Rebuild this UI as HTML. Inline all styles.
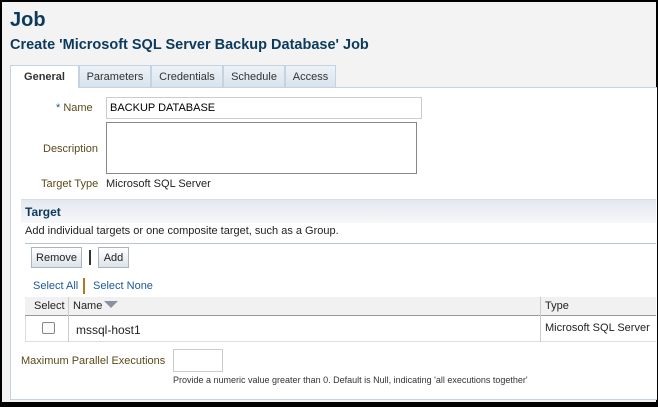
<!DOCTYPE html>
<html><head><style>
body{margin:0;width:658px;height:407px;background:#000;font-family:"Liberation Sans",Arial,sans-serif;overflow:hidden;position:relative}
.bg{position:absolute;left:2px;top:2px;width:654px;height:400px;background:#f3f3f3}
.a{position:absolute;white-space:nowrap}
.panel{position:absolute;left:10px;top:87px;width:646px;height:311px;background:#fff;border-left:1px solid #c5d3e0;border-top:1px solid #c5d3e0;border-bottom:1px solid #c5d3e0}
.tab{position:absolute;top:65px;height:22px;background:linear-gradient(#edf2f7,#d9e3ed);border:1px solid #c5d3e0;border-bottom:none;font-size:11px;color:#333;line-height:22px;text-align:center;box-sizing:border-box}
.lbl{font-size:11px;color:#5a4a1a}
.btn{position:absolute;height:21px;border:1px solid #a9b4bf;background:linear-gradient(#fff,#dde3ea);font-size:11px;line-height:20px;text-align:center;box-sizing:border-box;color:#222}
.lnk{font-size:11px;color:#1a5a96}
</style></head><body>
<div class="bg"></div>
<div class="a" style="left:10px;top:9px;font-size:20px;font-weight:bold;color:#0b3a5c">Job</div>
<div class="a" style="left:10px;top:37px;font-size:14.5px;font-weight:bold;color:#0b3a5c">Create 'Microsoft SQL Server Backup Database' Job</div>
<div class="panel"></div>
<div class="tab" style="left:10px;width:69px;background:#fff;font-weight:bold;height:23px">General</div>
<div class="tab" style="left:79px;width:72px">Parameters</div>
<div class="tab" style="left:151px;width:72px">Credentials</div>
<div class="tab" style="left:223px;width:62px">Schedule</div>
<div class="tab" style="left:285px;width:51px">Access</div>
<div class="a lbl" style="left:56px;top:102px"><span style="color:#1a5a96">*</span> Name</div>
<div class="a" style="left:106px;top:97px;width:316px;height:22px;border:1px solid #ccc;box-sizing:border-box;font-size:11px;line-height:20px;padding-left:3px">BACKUP DATABASE</div>
<div class="a lbl" style="left:43px;top:143px">Description</div>
<div class="a" style="left:106px;top:122px;width:311px;height:52px;border:1px solid #888;box-sizing:border-box"></div>
<div class="a lbl" style="left:41px;top:178px">Target Type</div>
<div class="a" style="left:106px;top:178px;font-size:11px;color:#222">Microsoft SQL Server</div>
<div class="a" style="left:21px;top:199px;width:635px;height:23px;background:linear-gradient(#e4e8ee,#f6f7f9);border-top:1px solid #d8dde3"></div>
<div class="a" style="left:25px;top:205px;font-size:12px;font-weight:bold;color:#0b3a5c">Target</div>
<div class="a" style="left:25px;top:225px;font-size:11px;color:#222">Add individual targets or one composite target, such as a Group.</div>
<div class="a" style="left:25px;top:243px;width:631px;height:1px;background:#b8c6d4"></div>
<div class="btn" style="left:31px;top:247px;width:51px">Remove</div>
<div class="a" style="left:89px;top:250px;width:2px;height:15px;background:#333"></div>
<div class="btn" style="left:98px;top:247px;width:31px">Add</div>
<div class="a lnk" style="left:33px;top:280px">Select All</div>
<div class="a" style="left:83px;top:278px;width:2px;height:16px;background:#b07a1a"></div>
<div class="a lnk" style="left:93px;top:280px">Select None</div>
<div class="a" style="left:25px;top:297px;width:631px;height:45px;border-left:1px solid #ddd;border-bottom:1px solid #ddd;box-sizing:border-box"></div>
<div class="a" style="left:25px;top:297px;width:631px;height:19px;background:#f1f1f1;border-bottom:1px solid #999;box-sizing:border-box"></div>
<div class="a" style="left:68px;top:297px;width:1px;height:45px;background:#ccc"></div>
<div class="a" style="left:540px;top:297px;width:1px;height:45px;background:#ccc"></div>
<div class="a" style="left:34px;top:300px;font-size:11px;color:#222">Select</div>
<div class="a" style="left:73px;top:300px;font-size:11px;color:#222">Name</div>
<svg class="a" style="left:104px;top:301px" width="14" height="8"><path d="M0 0H14L7 7Z" fill="#8892a0"/></svg>
<div class="a" style="left:545px;top:300px;font-size:11px;color:#222">Type</div>
<div class="a" style="left:42px;top:322px;width:11px;height:10px;border:1px solid #888;border-radius:2px;background:#fafafa"></div>
<div class="a" style="left:76px;top:323px;font-size:12px;color:#222">mssql-host1</div>
<div class="a" style="left:545px;top:322px;font-size:11px;color:#222">Microsoft SQL Server</div>
<div class="a lbl" style="left:21px;top:355px">Maximum Parallel Executions</div>
<div class="a" style="left:173px;top:349px;width:50px;height:23px;border:1px solid #ccc;box-sizing:border-box"></div>
<div class="a" style="left:173px;top:375px;font-size:9px;color:#333">Provide a numeric value greater than 0. Default is Null, indicating 'all executions together'</div>
</body></html>
